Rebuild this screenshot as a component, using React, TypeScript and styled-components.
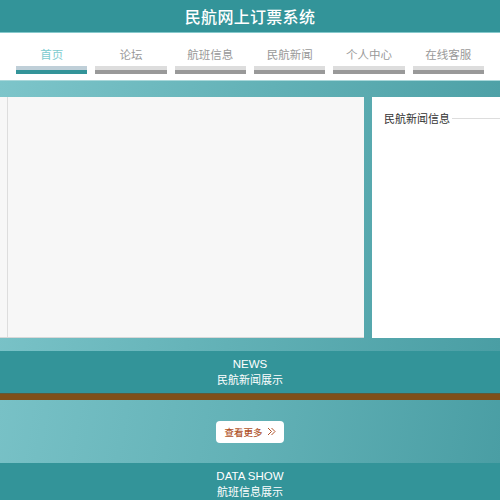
import React from "react";
import styled, { createGlobalStyle } from "styled-components";

const GlobalStyle = createGlobalStyle`
  html, body {
    margin: 0;
    padding: 0;
    background: #ffffff;
    font-family: "Noto Sans CJK SC", "Noto Sans", sans-serif;
  }
  * { box-sizing: border-box; }
`;

const Page = styled.div`
  width: 500px;
  height: 500px;
  overflow: hidden;
  display: flex;
  flex-direction: column;
`;

const Header = styled.header`
  flex: 0 0 33px;
  background: #339499;
  border-bottom: 1px solid #86c9cc;
  display: flex;
  align-items: center;
  justify-content: center;
  color: #ffffff;
  font-size: 16px;
  font-weight: 500;
  letter-spacing: 0.3px;
`;

const Nav = styled.nav`
  flex: 0 0 48px;
  background: #ffffff;
  border-bottom: 1px solid #a9d8da;
  display: flex;
  padding: 0 12px;
`;

const NavItem = styled.a<{ $active?: boolean }>`
  flex: 1;
  display: flex;
  flex-direction: column;
  align-items: center;
  padding-top: 13px;
  font-size: 11.5px;
  line-height: 16px;
  color: ${(p) => (p.$active ? "#7ccbcf" : "#999999")};
  text-decoration: none;
  cursor: pointer;
`;

const NavBar = styled.span<{ $active?: boolean }>`
  margin-top: 4px;
  align-self: stretch;
  margin-left: 4px;
  margin-right: 4px;
  height: 8px;
  border-top: 4px solid ${(p) => (p.$active ? "#bfcfd8" : "#dddddd")};
  background: ${(p) => (p.$active ? "#339499" : "#999999")};
`;

const Showcase = styled.section`
  flex: 0 0 270px;
  background: linear-gradient(100deg, #7dc5ca 0%, #62b1b6 50%, #4a9ea4 100%);
  padding: 16px 0 13px;
  display: flex;
  gap: 8px;
`;

const Slides = styled.div`
  flex: 0 0 364px;
  background: #f7f7f7;
  padding-left: 7px;
  border-bottom: 1px solid #d8d8d8;
`;

const SlideFrame = styled.div`
  height: 100%;
  border-left: 1px solid #dddddd;
  background: #f7f7f7;
`;

const NewsPanel = styled.aside`
  flex: 1;
  background: #ffffff;
  padding: 13px 0 0 12px;
`;

const PanelTitle = styled.div`
  display: flex;
  align-items: center;
  font-size: 11px;
  color: #333333;
  white-space: nowrap;

  &::after {
    content: "";
    flex: 1;
    height: 1px;
    margin-left: 2px;
    background: #dddddd;
  }
`;

const Banner = styled.div`
  flex: 0 0 42px;
  background: #339499;
  color: #ffffff;
  display: flex;
  flex-direction: column;
  align-items: center;
  justify-content: center;
  font-size: 11px;
  line-height: 15px;
`;

const BannerEn = styled.span`
  font-family: "Liberation Sans", Arial, sans-serif;
  font-size: 11.5px;
`;

const Stripe = styled.div`
  flex: 0 0 7px;
  background: #7f4f19;
  border-top: 1px solid #5e5a3a;
`;

const MoreArea = styled.div`
  flex: 0 0 63px;
  background: linear-gradient(100deg, #78c1c6 0%, #62b1b6 50%, #4a9ea4 100%);
  display: flex;
  align-items: center;
  justify-content: center;
`;

const MoreButton = styled.button`
  width: 68px;
  height: 22px;
  border: none;
  border-radius: 4px;
  background: #ffffff;
  color: #b0532a;
  font-family: "Noto Sans CJK SC", sans-serif;
  font-size: 9.5px;
  font-weight: 500;
  display: flex;
  align-items: center;
  justify-content: center;
  gap: 4px;
  padding: 0;
  cursor: pointer;
`;

const navItems = ["首页", "论坛", "航班信息", "民航新闻", "个人中心", "在线客服"];

function DoubleChevron() {
  return (
    <svg width="9" height="9" viewBox="0 0 9 9" fill="none" stroke="#b0532a" strokeWidth="1">
      <path d="M1 1l3.5 3.5L1 8" />
      <path d="M4.5 1L8 4.5 4.5 8" />
    </svg>
  );
}

export default function App() {
  return (
    <Page>
      <GlobalStyle />
      <Header>民航网上订票系统</Header>
      <Nav>
        {navItems.map((label, i) => (
          <NavItem key={label} $active={i === 0}>
            {label}
            <NavBar $active={i === 0} />
          </NavItem>
        ))}
      </Nav>
      <Showcase>
        <Slides>
          <SlideFrame />
        </Slides>
        <NewsPanel>
          <PanelTitle>民航新闻信息</PanelTitle>
        </NewsPanel>
      </Showcase>
      <Banner>
        <BannerEn>NEWS</BannerEn>
        <span>民航新闻展示</span>
      </Banner>
      <Stripe />
      <MoreArea>
        <MoreButton>
          查看更多
          <DoubleChevron />
        </MoreButton>
      </MoreArea>
      <Banner>
        <BannerEn>DATA SHOW</BannerEn>
        <span>航班信息展示</span>
      </Banner>
    </Page>
  );
}
